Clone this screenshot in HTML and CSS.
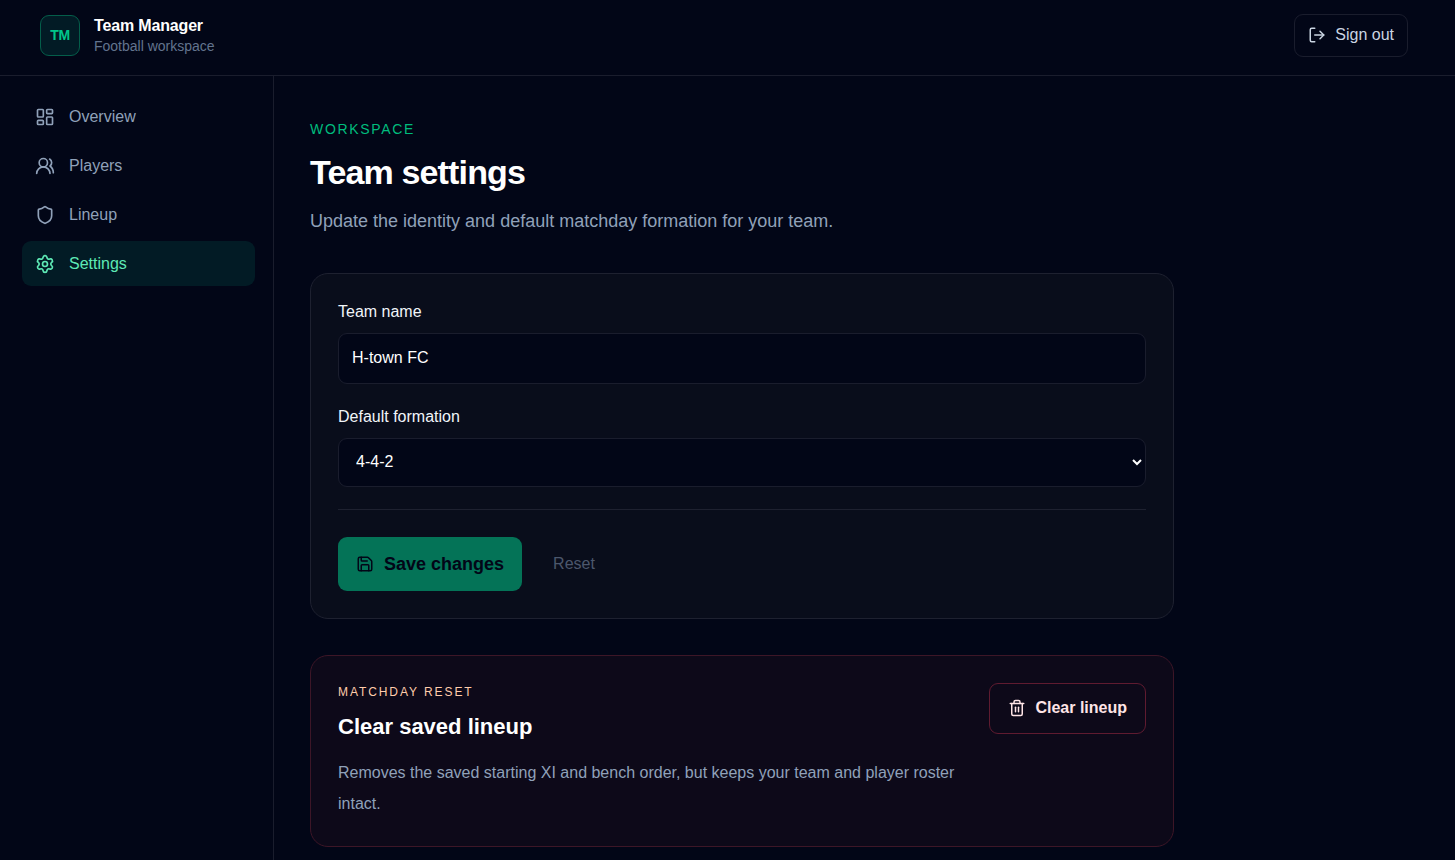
FILE: index.html
```html
<!DOCTYPE html>
<html lang="en">
<head>
<meta charset="utf-8">
<meta name="viewport" content="width=device-width, initial-scale=1">
<title>Team settings</title>
<link rel="stylesheet" href="styles.css">
</head>
<body>
<header class="topbar">
  <div class="container topbar-inner">
    <div class="brand">
      <span class="brand-mark">TM</span>
      <div>
        <div class="brand-name">Team Manager</div>
        <div class="brand-sub">Football workspace</div>
      </div>
    </div>
    <button class="signout" type="button">
      <svg class="icon icon-sm" viewBox="0 0 24 24"><path d="m16 17 5-5-5-5"/><path d="M21 12H9"/><path d="M9 21H5a2 2 0 0 1-2-2V5a2 2 0 0 1 2-2h4"/></svg>
      Sign out
    </button>
  </div>
</header>
<div class="container shell">
  <nav class="sidebar" aria-label="Main">
    <a class="nav-link" href="#overview"><svg class="icon" viewBox="0 0 24 24"><rect width="7" height="9" x="3" y="3" rx="1"/><rect width="7" height="5" x="14" y="3" rx="1"/><rect width="7" height="9" x="14" y="12" rx="1"/><rect width="7" height="5" x="3" y="16" rx="1"/></svg>Overview</a>
    <a class="nav-link" href="#players"><svg class="icon" viewBox="0 0 24 24"><path d="M18 21a8 8 0 0 0-16 0"/><circle cx="10" cy="8" r="5"/><path d="M22 20c0-3.37-2-6.5-4-8a5 5 0 0 0-.45-8.3"/></svg>Players</a>
    <a class="nav-link" href="#lineup"><svg class="icon" viewBox="0 0 24 24"><path d="M20 13c0 5-3.5 7.5-7.66 8.95a1 1 0 0 1-.67-.01C7.5 20.5 4 18 4 13V6a1 1 0 0 1 1-1c2 0 4.5-1.2 6.24-2.72a1.17 1.17 0 0 1 1.52 0C14.51 3.81 17 5 19 5a1 1 0 0 1 1 1z"/></svg>Lineup</a>
    <a class="nav-link active" href="#settings" aria-current="page"><svg class="icon" viewBox="0 0 24 24"><path d="M9.671 4.136a2.34 2.34 0 0 1 4.659 0 2.34 2.34 0 0 0 3.319 1.915 2.34 2.34 0 0 1 2.33 4.033 2.34 2.34 0 0 0 0 3.831 2.34 2.34 0 0 1-2.33 4.033 2.34 2.34 0 0 0-3.319 1.915 2.34 2.34 0 0 1-4.659 0 2.34 2.34 0 0 0-3.32-1.915 2.34 2.34 0 0 1-2.33-4.033 2.34 2.34 0 0 0 0-3.831A2.34 2.34 0 0 1 6.35 6.051a2.34 2.34 0 0 0 3.319-1.915"/><circle cx="12" cy="12" r="3"/></svg>Settings</a>
  </nav>
  <main class="content">
    <p class="eyebrow">WORKSPACE</p>
    <h1 class="title">Team settings</h1>
    <p class="lead">Update the identity and default matchday formation for your team.</p>
    <form class="card">
      <div class="field">
        <label for="team-name">Team name</label>
        <input class="control" id="team-name" type="text" value="H-town FC">
      </div>
      <div class="field">
        <label for="formation">Default formation</label>
        <select class="control control-select" id="formation"><option>4-4-2</option><option>4-3-3</option><option>3-5-2</option></select>
      </div>
      <div class="actions">
        <button class="save" type="button"><svg class="icon icon-sm" viewBox="0 0 24 24"><path d="M15.2 3a2 2 0 0 1 1.4.6l3.8 3.8a2 2 0 0 1 .6 1.4V19a2 2 0 0 1-2 2H5a2 2 0 0 1-2-2V5a2 2 0 0 1 2-2z"/><path d="M17 21v-7a1 1 0 0 0-1-1H8a1 1 0 0 0-1 1v7"/><path d="M7 3v4a1 1 0 0 0 1 1h7"/></svg>Save changes</button>
        <button class="reset" type="button">Reset</button>
      </div>
    </form>
    <section class="card danger">
      <div class="danger-copy">
        <p class="danger-eyebrow">MATCHDAY RESET</p>
        <h2 class="danger-title">Clear saved lineup</h2>
        <p class="danger-text">Removes the saved starting XI and bench order, but keeps your team and player roster intact.</p>
      </div>
      <button class="clear" type="button"><svg class="icon icon-sm" viewBox="0 0 24 24"><path d="M10 11v6"/><path d="M14 11v6"/><path d="M19 6v14a2 2 0 0 1-2 2H7a2 2 0 0 1-2-2V6"/><path d="M3 6h18"/><path d="M8 6V4a2 2 0 0 1 2-2h4a2 2 0 0 1 2 2v2"/></svg>Clear lineup</button>
    </section>
  </main>
</div>
</body>
</html>
```
FILE: styles.css
```css
* { box-sizing: border-box; }
body {
  margin: 0;
  min-height: 100vh;
  display: flex;
  flex-direction: column;
  background: #020617;
  color: #fff;
  font: 16px/24px "Liberation Sans", Arial, sans-serif;
}
h1, h2, p { margin: 0; }
button, input, select { font: inherit; }
button { cursor: pointer; display: inline-flex; align-items: center; }
.icon {
  width: 20px;
  height: 20px;
  flex: none;
  fill: none;
  stroke: currentColor;
  stroke-width: 2;
  stroke-linecap: round;
  stroke-linejoin: round;
}
.icon-sm { width: 18px; height: 18px; }
.container { width: calc(100% - 15px); max-width: 1440px; margin-left: 4px; }

.topbar { border-bottom: 1px solid #1a1d2d; }
.topbar-inner {
  display: flex;
  align-items: center;
  justify-content: space-between;
  height: 75px;
  padding: 0 36px 4px;
}
.brand { display: flex; align-items: center; gap: 14px; }
.brand-mark {
  display: grid;
  place-items: center;
  width: 40px;
  height: 41px;
  padding-bottom: 2px;
  border: 1px solid #045e4a;
  border-radius: 9px;
  background: #021b25;
  color: #00c68a;
  font-size: 14px;
  font-weight: 700;
  letter-spacing: -0.025em;
}
.brand-name { font-weight: 700; line-height: 20px; letter-spacing: -0.01em; }
.brand-sub { color: #62748e; font-size: 14px; line-height: 20px; }
.signout {
  gap: 9px;
  height: 43px;
  padding: 0 13px 2px;
  border: 1px solid #1a1d2d;
  border-radius: 9px;
  background: none;
  color: #cad5e2;
}

.shell { display: flex; flex: 1; }
.sidebar {
  display: flex;
  flex-direction: column;
  gap: 4px;
  flex: 0 0 270px;
  padding: 18px;
  border-right: 1px solid #1a1d2d;
}
.nav-link {
  display: flex;
  align-items: center;
  gap: 14px;
  height: 45px;
  padding: 0 13px;
  border-radius: 9px;
  color: #90a1b9;
  text-decoration: none;
}
.nav-link.active { background: #021b25; color: #5ee9b5; }

.content { flex: 1; min-width: 0; padding: 40px 36px 13px; }
.eyebrow { color: #00bc7d; font-size: 14px; line-height: 26px; letter-spacing: 0.12em; }
.title { margin-top: 9px; font-size: 34px; line-height: 42px; letter-spacing: -0.025em; }
.lead { margin-top: 12px; color: #90a1b9; font-size: 18px; line-height: 32px; }
.card {
  display: flex;
  flex-direction: column;
  gap: 22px;
  max-width: 864px;
  margin-top: 36px;
  padding: 27px;
  border: 1px solid #1e2130;
  border-radius: 18px;
  background: #090d1b;
}
.field { display: flex; flex-direction: column; gap: 10px; }
.field label { line-height: 22px; color: #f1f5f9; }
.control {
  width: 100%;
  height: 51px;
  padding: 0 13px 2px;
  border: 1px solid #1a1d2d;
  border-radius: 9px;
  background: #020617;
  color: #fff;
}
.control-select { height: 49px; padding-right: 2px; }
.actions {
  display: flex;
  align-items: center;
  gap: 13px;
  padding-top: 27px;
  border-top: 1px solid #1e2130;
}
.save {
  gap: 10px;
  height: 54px;
  padding: 0 18px 1px;
  border: 0;
  border-radius: 9px;
  background: #047357;
  color: #020617;
  font-size: 18px;
  font-weight: 700;
}
.reset { padding: 10px 18px; border: 0; background: none; color: #4c576c; }

.danger {
  flex-direction: row;
  align-items: flex-start;
  justify-content: space-between;
  border-color: #3d1627;
  background: #0d0919;
}
.danger-copy { max-width: 630px; }
.danger-eyebrow { color: #ffccab; font-size: 12px; line-height: 18px; letter-spacing: 0.16em; }
.danger-title { margin-top: 10px; font-size: 22px; line-height: 32px; }
.danger-text { margin-top: 14px; color: #90a1b9; line-height: 31px; }
.clear {
  flex: none;
  gap: 9px;
  height: 51px;
  padding: 0 18px 2px;
  border: 1px solid #5f1b30;
  border-radius: 9px;
  background: none;
  color: #ffe4e6;
  font-weight: 700;
}
```
